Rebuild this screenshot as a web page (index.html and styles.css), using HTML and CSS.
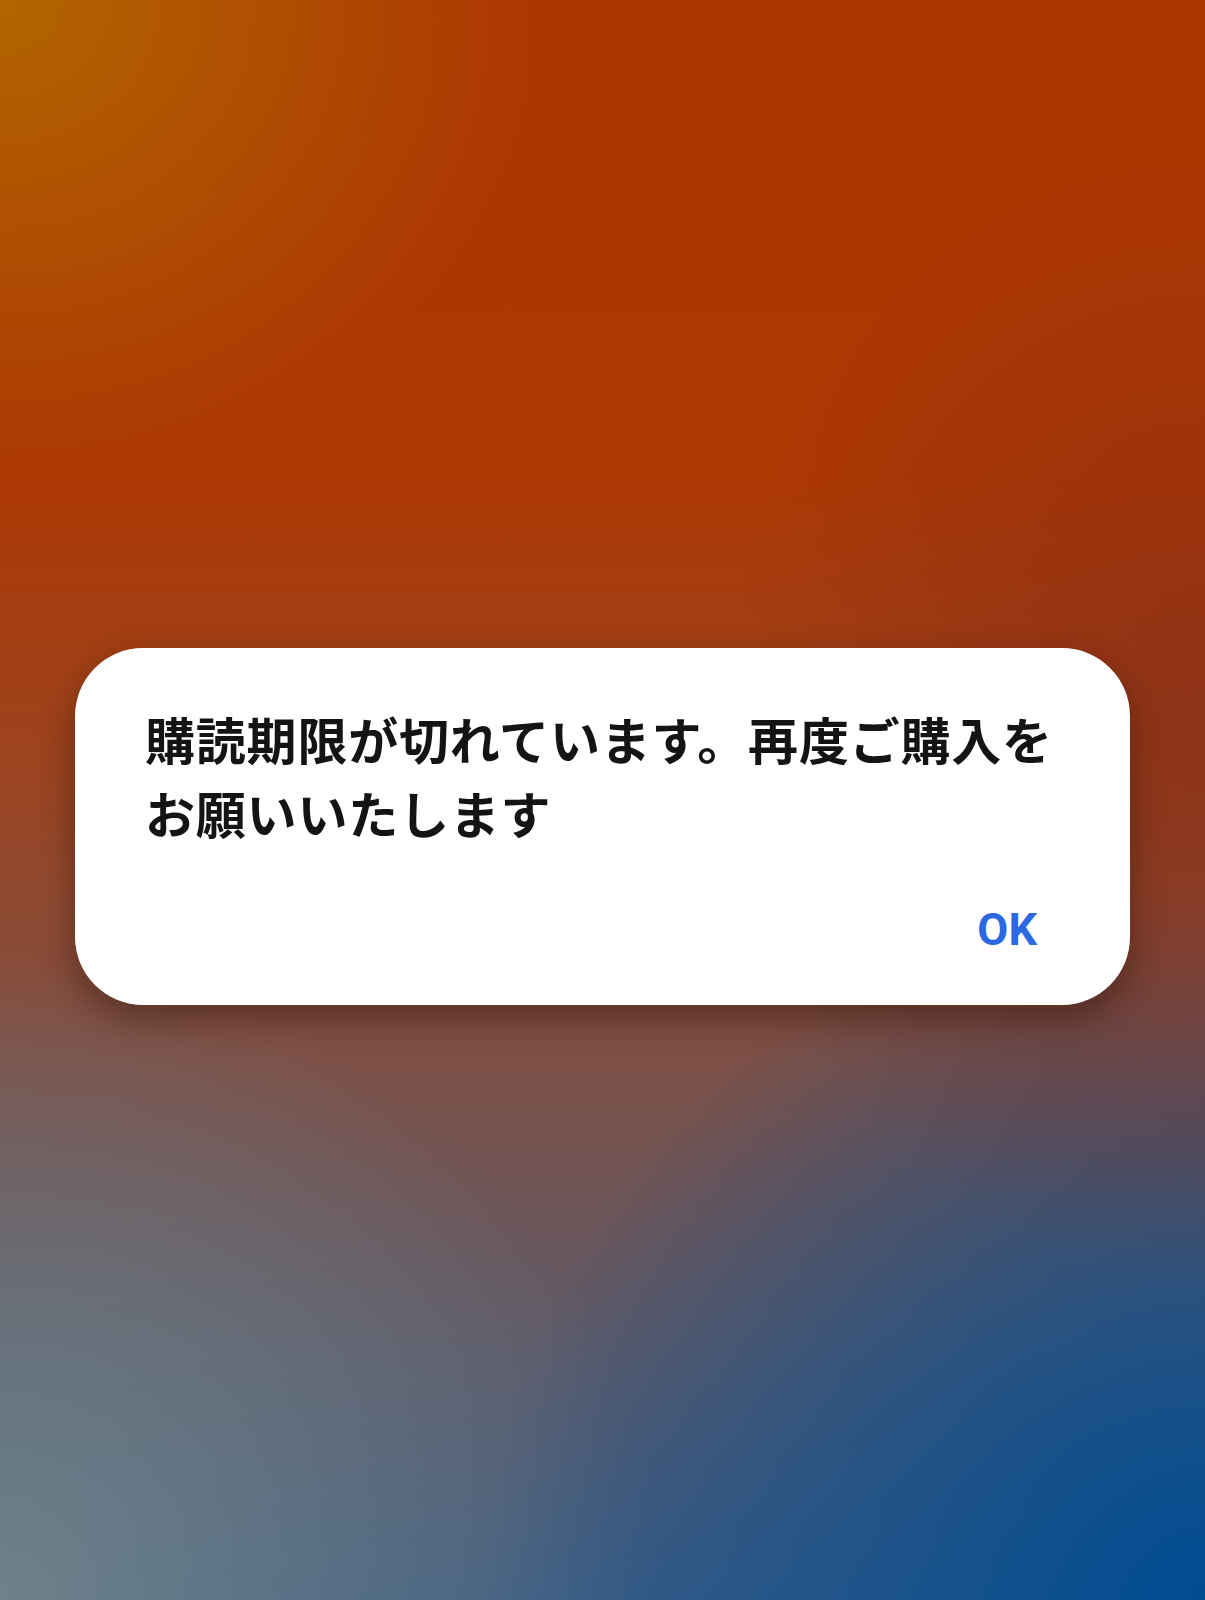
FILE: index.html
```html
<!DOCTYPE html>
<html lang="ja">
<head>
<meta charset="utf-8">
<title>購読期限</title>
<link rel="stylesheet" href="styles.css">
</head>
<body>
<div class="screen">
  <div class="dialog" role="alertdialog">
    <p class="message">購読期限が切れています。再度ご購入をお願いいたします</p>
    <div class="actions">
      <button class="ok-button" type="button">OK</button>
    </div>
  </div>
</div>
</body>
</html>
```

FILE: styles.css
```css
html, body {
  margin: 0;
  padding: 0;
}

body {
  width: 1205px;
  height: 1600px;
  overflow: hidden;
  font-family: "Noto Sans CJK JP", "Noto Sans", sans-serif;
}

.screen {
  box-sizing: border-box;
  width: 1205px;
  height: 1600px;
  padding: 648px 75px 0;
  background:
    radial-gradient(ellipse 45% 30% at 0% 0%, rgba(178, 104, 0, 0.95) 0%, rgba(178, 104, 0, 0) 100%),
    radial-gradient(ellipse 40% 35% at 100% 45%, rgba(130, 40, 20, 0.6) 0%, rgba(130, 40, 20, 0) 100%),
    radial-gradient(ellipse 60% 45% at 100% 100%, rgba(0, 76, 146, 1) 0%, rgba(0, 76, 146, 0) 100%),
    radial-gradient(ellipse 55% 40% at 0% 100%, rgba(110, 130, 138, 1) 0%, rgba(110, 130, 138, 0) 100%),
    linear-gradient(180deg, #ad3602 0%, #ad3804 30%, #9c4420 48%, #7e5046 66%, #5e5a68 84%, #3e5c82 100%);
}

.dialog {
  box-sizing: border-box;
  background: #ffffff;
  border-radius: 68px;
  padding: 53px 70px 49px 70px;
  box-shadow: 0 14px 34px rgba(40, 15, 5, 0.45);
}

.message {
  margin: 0;
  font-size: 50px;
  line-height: 74px;
  letter-spacing: 0.8px;
  font-weight: 700;
  color: #141414;
}

.actions {
  display: flex;
  justify-content: flex-end;
  margin-top: 54px;
}

.ok-button {
  border: 0;
  background: none;
  padding: 0;
  margin-right: 23px;
  font-family: Roboto, "Noto Sans", sans-serif;
  font-size: 45px;
  font-weight: 700;
  color: #2c68e0;
  line-height: normal;
  cursor: pointer;
}
```
